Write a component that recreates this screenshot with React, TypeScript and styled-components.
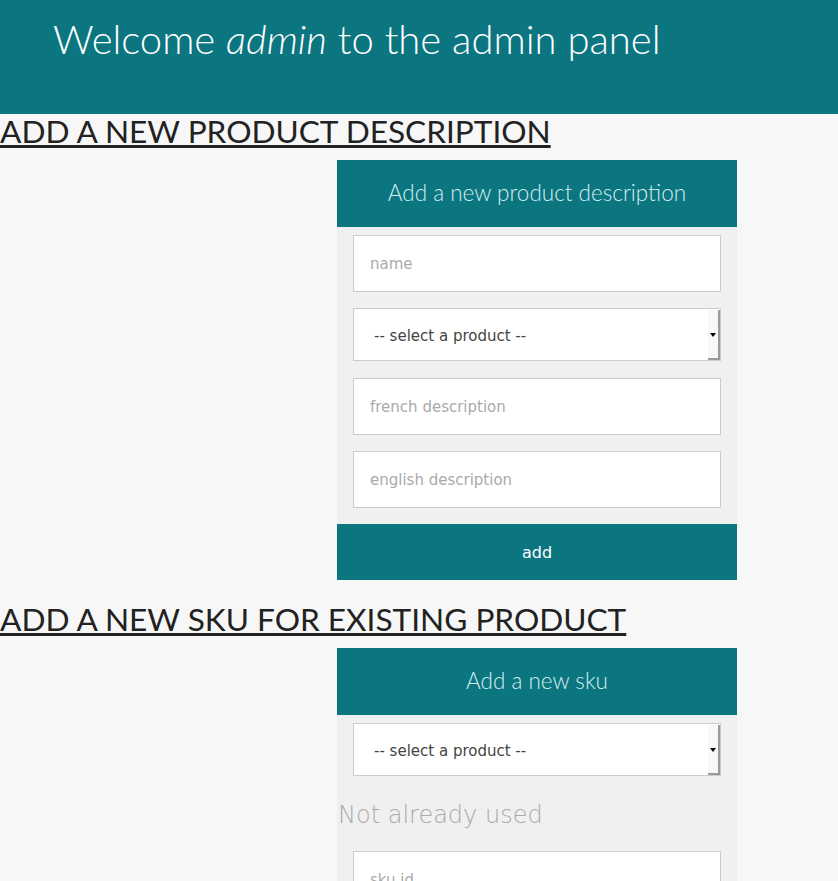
import React from "react";
import styled, { createGlobalStyle } from "styled-components";

const Global = createGlobalStyle`
  html, body { margin: 0; padding: 0; background: #f7f7f7; }
  body { font-family: "DejaVu Sans", sans-serif; }
  * { box-sizing: border-box; }
`;

const teal = "#0b7580";

const Header = styled.header`
  background: ${teal};
  height: 114px;
  padding: 12px 0 0 53px;
`;

const Title = styled.h1`
  margin: 0;
  font-family: Lato, sans-serif;
  font-weight: 300;
  font-size: 40px;
  line-height: 54px;
  color: #ffffff;
  em { font-style: italic; }
`;

const Section = styled.section<{ $top: number }>`
  display: flex;
  flex-direction: column;
  margin-top: ${(p) => p.$top}px;
`;

const SectionTitle = styled.h2`
  margin: 0;
  font-family: Lato, sans-serif;
  font-weight: 400;
  font-size: 31.6px;
  line-height: 34px;
  color: #222;
  text-decoration: underline;
  text-transform: uppercase;
`;

const FormBox = styled.form`
  width: 400px;
  margin: 12px 0 0 337px;
  background: #f0f0f0;
  display: flex;
  flex-direction: column;
`;

const FormHead = styled.div`
  background: ${teal};
  height: 67px;
  display: flex;
  align-items: center;
  justify-content: center;
  padding-bottom: 2px;
  font-family: Lato, sans-serif;
  font-weight: 300;
  font-size: 22.5px;
  color: #d6eef0;
`;

const Fields = styled.div<{ $top: number }>`
  padding: ${(p) => p.$top}px 16px 16px;
  display: flex;
  flex-direction: column;
  gap: 16px;
`;

const Input = styled.input`
  width: 100%;
  height: 57px;
  border: 1px solid #ccc;
  background: #fff;
  padding: 0 16px;
  font-family: "DejaVu Sans", sans-serif;
  font-size: 15px;
  color: #444;
  outline: none;
  &::placeholder { color: #aaa; }
`;

const SelectWrap = styled.div`
  position: relative;
  height: 53px;
  margin-bottom: 1px;
  &::after {
    content: "";
    position: absolute;
    right: 1px;
    top: 2px;
    bottom: 1px;
    width: 10px;
    background: #f8f8f8;
    border-right: 2px solid #9a9a9a;
    border-bottom: 2px solid #9a9a9a;
    border-bottom-left-radius: 1px;
    pointer-events: none;
  }
  &::before {
    content: "";
    position: absolute;
    right: 5px;
    top: 25px;
    width: 0;
    height: 0;
    border-left: 3px solid transparent;
    border-right: 3px solid transparent;
    border-top: 4px solid #000;
    z-index: 1;
    pointer-events: none;
  }
`;

const Select = styled.select`
  appearance: none;
  width: 100%;
  height: 100%;
  border: 1px solid #ccc;
  border-radius: 0;
  background: #fff;
  padding: 2px 20px 0;
  font-family: "DejaVu Sans", sans-serif;
  font-size: 15px;
  color: #444;
  outline: none;
`;

const Note = styled.div`
  margin: 4px 0 10px 1px;
  font-family: "DejaVu Sans", sans-serif;
  font-weight: 200;
  font-size: 24px;
  line-height: 36px;
  color: #aaa;
`;

const SubmitButton = styled.button`
  height: 56px;
  border: none;
  background: ${teal};
  color: #fff;
  font-family: "DejaVu Sans", sans-serif;
  font-size: 16px;
`;

function ProductSelect() {
  return (
    <SelectWrap>
      <Select defaultValue="">
        <option value="">-- select a product --</option>
      </Select>
    </SelectWrap>
  );
}

export default function App() {
  return (
    <>
      <Global />
      <Header>
        <Title>
          Welcome <em>admin</em> to the admin panel
        </Title>
      </Header>
      <Section $top={0}>
        <SectionTitle>Add a new product description</SectionTitle>
        <FormBox onSubmit={(e) => e.preventDefault()}>
          <FormHead>Add a new product description</FormHead>
          <Fields $top={8}>
            <Input placeholder="name" />
            <ProductSelect />
            <Input placeholder="french description" />
            <Input placeholder="english description" />
          </Fields>
          <SubmitButton type="submit">add</SubmitButton>
        </FormBox>
      </Section>
      <Section $top={22}>
        <SectionTitle>Add a new sku for existing product</SectionTitle>
        <FormBox onSubmit={(e) => e.preventDefault()}>
          <FormHead>Add a new sku</FormHead>
          <Fields $top={8}>
            <ProductSelect />
          </Fields>
          <Note>Not already used</Note>
          <Fields $top={8}>
            <Input placeholder="sku id" />
            <Input placeholder="sku" />
          </Fields>
        </FormBox>
      </Section>
    </>
  );
}
